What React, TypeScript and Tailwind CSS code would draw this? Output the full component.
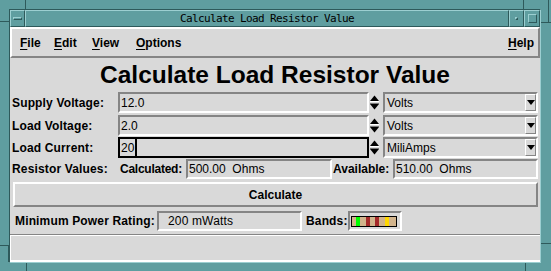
import React from 'react'

const sunken = 'border-2 border-t-[#858585] border-l-[#858585] border-b-white border-r-white'
const raised = 'border-2 border-t-white border-l-white border-b-[#858585] border-r-[#858585]'
const tealRaised = 'border border-t-[#9ccfd1] border-l-[#9ccfd1] border-b-[#2e5a5b] border-r-[#2e5a5b]'

function SpinArrows() {
  return (
    <svg width="11" height="21" viewBox="0 0 11 21" className="shrink-0">
      <polygon points="1,9 5.5,3.5 10,9" fill="#000" />
      <line x1="1" y1="9.5" x2="10" y2="9.5" stroke="#fff" />
      <polygon points="1,12 10,12 5.5,17.5" fill="#000" />
      <line x1="1" y1="11.5" x2="10" y2="11.5" stroke="#777" />
    </svg>
  )
}

function SpinRow({ label, value, unit, focused }: { label: string; value: string; unit: string; focused?: boolean }) {
  return (
    <div className="flex h-[21px] items-stretch">
      <div className="flex w-[106px] items-center font-bold tracking-[0.15px]">{label}</div>
      <div
        className={
          'flex w-[251px] items-center px-[1px] ' +
          (focused ? 'border-2 border-black' : sunken)
        }
      >
        <span>{value}</span>
        {focused && <span className="ml-[1px] h-full w-[2px] bg-black" />}
      </div>
      <SpinArrows />
      <div className={'ml-[3px] flex flex-1 items-center ' + sunken}>
        <span className="flex-1 pl-[2px]">{unit}</span>
        <div className="flex h-full w-[11px] items-center justify-center border border-t-white border-l-white border-b-[#858585] border-r-[#858585]">
          <svg width="8" height="5" viewBox="0 0 8 5">
            <polygon points="0,0 8,0 4,5" fill="#000" />
          </svg>
        </div>
      </div>
    </div>
  )
}

export default function App() {
  return (
    <div
      className="relative h-[271px] w-[551px] overflow-hidden bg-[#5f9ea0] pb-[8px] pl-[9px] pr-[10px] pt-[9px] text-[12px] leading-[12px] text-black"
      style={{ fontFamily: '"Liberation Sans", Arial, sans-serif' }}
    >
      {/* window frame resize corner marks */}
      <div className="absolute left-[25px] top-0 h-[9px] w-px bg-[#2e5a5b]" />
      <div className="absolute left-[523px] top-0 h-[9px] w-px bg-[#2e5a5b]" />
      <div className="absolute left-0 top-[21px] h-px w-[9px] bg-[#2e5a5b]" />
      <div className="absolute right-0 top-[22px] h-px w-[10px] bg-[#2e5a5b]" />
      <div className="absolute left-0 top-[245px] h-px w-[9px] bg-[#2e5a5b]" />
      <div className="absolute right-0 top-[243px] h-px w-[10px] bg-[#2e5a5b]" />
      <div className="absolute bottom-0 left-[26px] h-[8px] w-px bg-[#2e5a5b]" />
      <div className="absolute bottom-0 left-[525px] h-[8px] w-px bg-[#2e5a5b]" />
      <div className="absolute right-[2px] top-0 h-[22px] w-px bg-[#2e5a5b]" />
      <div className="absolute left-[8px] top-[245px] h-[17px] w-px bg-[#2e5a5b]" />

      <div className="flex h-full flex-col border border-t-[#2e5a5b] border-l-[#2e5a5b] border-b-[#9ccfd1] border-r-[#9ccfd1]">
        {/* Title bar */}
        <div className="flex h-[17px] shrink-0">
          <div className={'flex w-[15px] items-center justify-center ' + tealRaised}>
            <div className="h-[3px] w-[9px] border border-t-[#9ccfd1] border-l-[#9ccfd1] border-b-[#2e5a5b] border-r-[#2e5a5b]" />
          </div>
          <div
            className={'flex flex-1 items-center justify-center text-[11px] tracking-[-0.62px] ' + tealRaised}
            style={{ fontFamily: '"DejaVu Sans Mono", "Liberation Mono", monospace' }}
          >
            Calculate Load Resistor Value
          </div>
          <div className={'flex w-[15px] items-center justify-center ' + tealRaised}>
            <div className="h-[3px] w-[3px] border border-t-[#9ccfd1] border-l-[#9ccfd1] border-b-[#2e5a5b] border-r-[#2e5a5b]" />
          </div>
          <div className={'flex w-[16px] items-center justify-center ' + tealRaised}>
            <div className="h-[9px] w-[9px] border border-t-[#9ccfd1] border-l-[#9ccfd1] border-b-[#2e5a5b] border-r-[#2e5a5b]" />
          </div>
        </div>

        {/* Menu bar */}
        <div className={'flex h-[31px] shrink-0 items-center bg-[#d9d9d9] pl-[8px] pr-[4px] font-bold ' + raised}>
          <span className="w-[34px]"><u className="underline-offset-2">F</u>ile</span>
          <span className="w-[38px]"><u className="underline-offset-2">E</u>dit</span>
          <span className="w-[44px]"><u className="underline-offset-2">V</u>iew</span>
          <span><u className="underline-offset-2">O</u>ptions</span>
          <span className="ml-auto"><u className="underline-offset-2">H</u>elp</span>
        </div>

        {/* Form */}
        <div className="flex flex-1 flex-col bg-[#d9d9d9]">
          <div className="h-[34px] shrink-0 pt-[5px] text-center text-[24.5px] font-bold leading-[24px]">
            Calculate Load Resistor Value
          </div>

          <div className="flex flex-col px-[2px]">
            <div className="h-[23px]">
              <SpinRow label="Supply Voltage:" value="12.0" unit="Volts" />
            </div>
            <div className="h-[22px]">
              <SpinRow label="Load Voltage:" value="2.0" unit="Volts" />
            </div>
            <div className="h-[22px]">
              <SpinRow label="Load Current:" value="20" unit="MiliAmps" focused />
            </div>
            <div className="flex h-[23px] items-start">
              <div className="flex h-[20px] w-[108px] items-center font-bold tracking-[0.15px]">Resistor Values:</div>
              <div className="flex h-[20px] w-[66px] items-center font-bold tracking-[-0.25px]">Calculated:</div>
              <div className={'flex h-[20px] w-[146px] items-center whitespace-pre px-[1px] ' + sunken}>500.00  Ohms</div>
              <div className="flex h-[20px] w-[61px] items-center pl-[1px] font-bold">Available:</div>
              <div className={'flex h-[20px] flex-1 items-center whitespace-pre px-[1px] ' + sunken}>510.00  Ohms</div>
            </div>
            <div className="h-[29px]">
              <div className={'ml-[1px] flex h-[25px] items-center justify-center font-bold ' + raised}>Calculate</div>
            </div>
          </div>

          <div className="flex h-[23px] items-start pl-[5px] tracking-[0.15px]">
            <div className="flex h-[20px] w-[142px] items-center font-bold">Minimum Power Rating:</div>
            <div className={'flex h-[20px] w-[145px] items-center whitespace-pre pl-[9px] ' + sunken}>200 mWatts</div>
            <div className="flex h-[20px] w-[46px] items-center pl-[4px] font-bold">Bands:</div>
            <div className={'flex h-[20px] w-[54px] items-center pl-[1px] ' + sunken}>
              <div className="flex h-[11px] w-[46px] items-stretch border border-black bg-[#d2b48c] pl-[4px]">
                <div className="w-[4px] bg-[#00ff00]" />
                <div className="ml-[6px] w-[4px] bg-[#a52a2a]" />
                <div className="ml-[5px] w-[4px] bg-[#a52a2a]" />
                <div className="ml-[6px] w-[4px] bg-[#ffd700]" />
              </div>
            </div>
          </div>

          <div className="h-[2px] shrink-0 border-t border-b border-t-[#858585] border-b-white" />
          <div className="flex-1 border-b-2 border-l border-b-white border-l-white" />
        </div>
      </div>
    </div>
  )
}
